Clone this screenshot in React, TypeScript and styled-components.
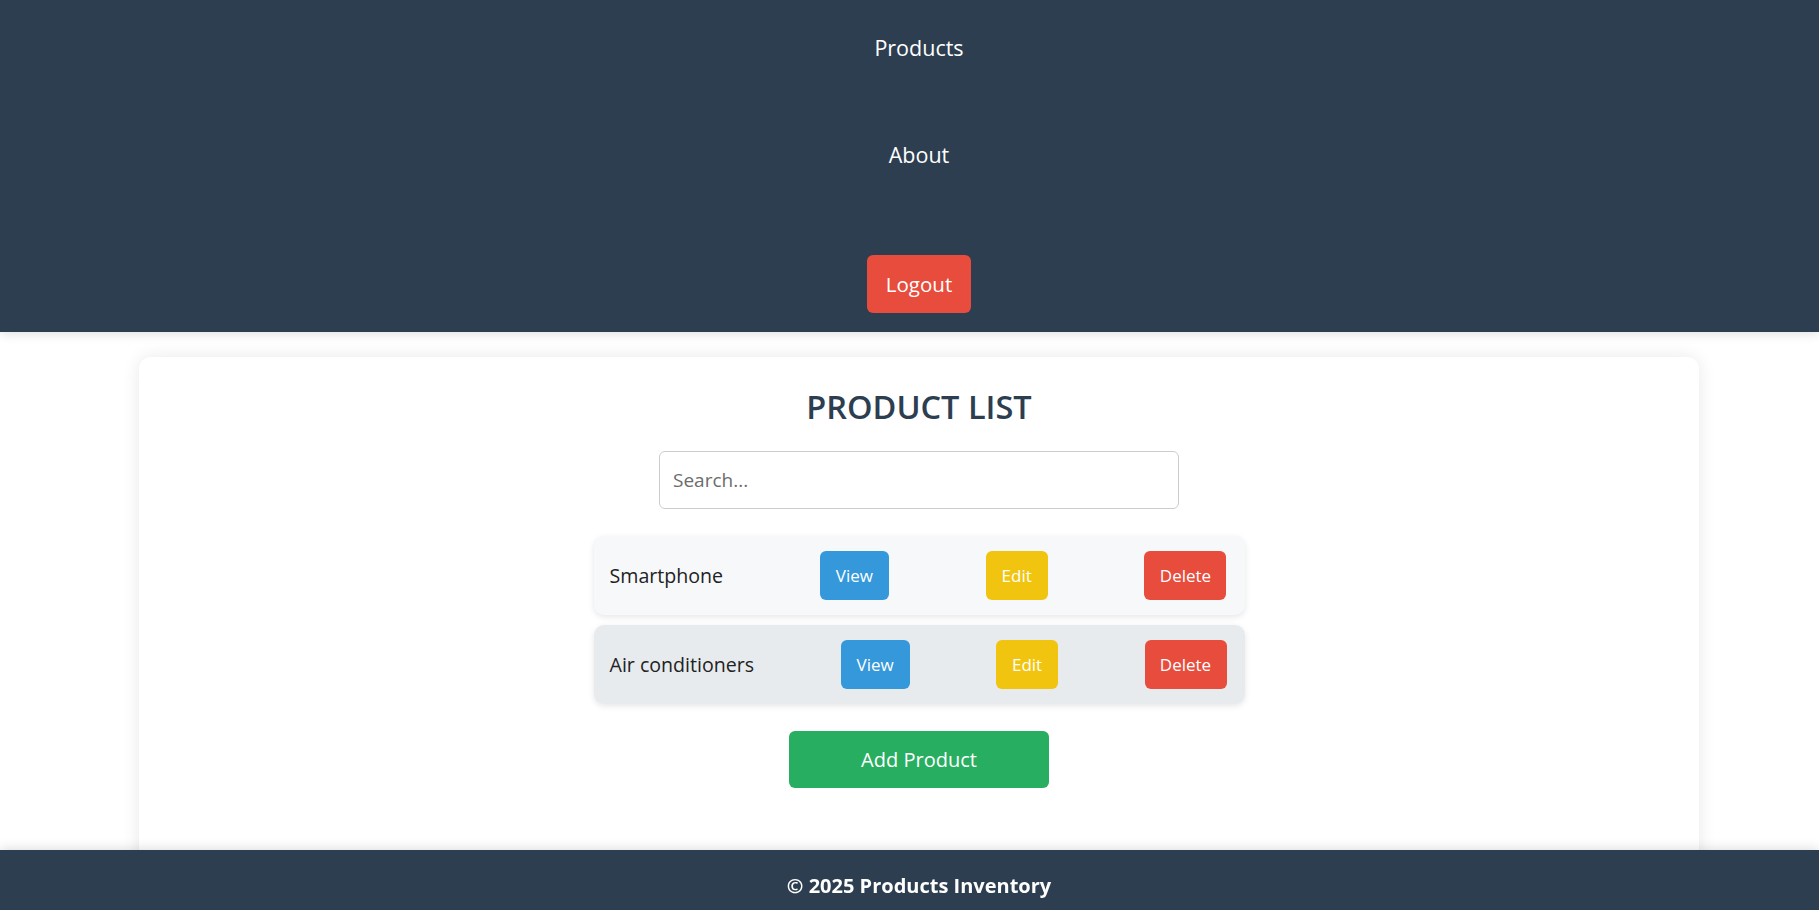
import styled, { createGlobalStyle } from "styled-components";

const GlobalStyle = createGlobalStyle`
  * { box-sizing: border-box; }
  html, body {
    margin: 0;
    padding: 0;
    background: #ffffff;
    font-family: "Open Sans", "Noto Sans", sans-serif;
    color: #222;
  }
`;

type Product = { id: number; name: string };

const products: Product[] = [
  { id: 1, name: "Smartphone" },
  { id: 2, name: "Air conditioners" },
];

const Header = styled.header`
  background: #2c3e50;
  padding: 20px 0 19px 19px;
  box-shadow: 0 2px 10px rgba(0, 0, 0, 0.12);
  position: relative;
  z-index: 1;
`;

const Nav = styled.nav`
  display: flex;
  flex-direction: column;
  align-items: center;
  gap: 51px;
`;

const NavLink = styled.a`
  display: block;
  padding: 16px;
  line-height: 24px;
  color: #ffffff;
  font-size: 21.5px;
  text-decoration: none;
`;

const LogoutButton = styled.button`
  margin-top: 21px;
  width: 104px;
  height: 58px;
  border: none;
  border-radius: 6px;
  background: #e74c3c;
  color: #ffffff;
  font-family: inherit;
  font-size: 20.5px;
  cursor: pointer;
`;

const Main = styled.main`
  padding: 25px 120px 0 139px;
`;

const Card = styled.section`
  background: #ffffff;
  border-radius: 12px;
  box-shadow: 0 0 18px rgba(0, 0, 0, 0.09);
  padding: 30px 20px 90px;
  display: flex;
  flex-direction: column;
  align-items: center;
`;

const Title = styled.h2`
  margin: 0;
  font-size: 32.5px;
  line-height: 40px;
  font-weight: 600;
  color: #2c3e50;
`;

const SearchInput = styled.input`
  margin-top: 24px;
  width: 520px;
  height: 58px;
  padding: 0 13px;
  border: 1px solid #cccccc;
  border-radius: 6px;
  font-family: inherit;
  font-size: 19px;
  color: #333;
  outline: none;

  &::placeholder {
    color: #6c6c6c;
  }
`;

const List = styled.ul`
  list-style: none;
  margin: 27px 0 0;
  padding: 0;
  width: 651px;
  display: flex;
  flex-direction: column;
  gap: 10px;
`;

const Row = styled.li<{ $alt?: boolean }>`
  height: 79px;
  display: flex;
  align-items: center;
  justify-content: space-between;
  padding: 0 18px 0 16px;
  border-radius: 10px;
  background: ${({ $alt }) => ($alt ? "#e8ebee" : "#f7f8fa")};
  box-shadow: 0 2px 6px rgba(0, 0, 0, 0.1);
`;

const Name = styled.span`
  font-size: 19.6px;
  color: #222;
`;

const ActionButton = styled.button<{ $color: string; $w: number }>`
  width: ${({ $w }) => $w}px;
  height: 49px;
  border: none;
  border-radius: 6px;
  background: ${({ $color }) => $color};
  color: #ffffff;
  font-family: inherit;
  font-size: 17px;
  cursor: pointer;
`;

const AddButton = styled.button`
  margin-top: 27px;
  width: 260px;
  height: 57px;
  border: none;
  border-radius: 6px;
  background: #27ae60;
  color: #ffffff;
  font-family: inherit;
  font-size: 20px;
  cursor: pointer;
`;

const Footer = styled.footer`
  position: fixed;
  left: 0;
  right: 0;
  bottom: 0;
  height: 60px;
  padding: 10px 0 0 19px;
  display: flex;
  align-items: center;
  justify-content: center;
  background: #2c3e50;
  color: #ffffff;
  font-size: 20px;
  font-weight: 700;
  box-shadow: 0 -2px 10px rgba(0, 0, 0, 0.12);
`;

export default function App() {
  return (
    <>
      <GlobalStyle />
      <Header>
        <Nav>
          <NavLink href="#">Products</NavLink>
          <NavLink href="#">About</NavLink>
          <LogoutButton>Logout</LogoutButton>
        </Nav>
      </Header>
      <Main>
        <Card>
          <Title>PRODUCT LIST</Title>
          <SearchInput placeholder="Search..." />
          <List>
            {products.map((p, i) => (
              <Row key={p.id} $alt={i % 2 === 1}>
                <Name>{p.name}</Name>
                <ActionButton $color="#3498db" $w={69}>View</ActionButton>
                <ActionButton $color="#f1c40f" $w={62}>Edit</ActionButton>
                <ActionButton $color="#e74c3c" $w={82}>Delete</ActionButton>
              </Row>
            ))}
          </List>
          <AddButton>Add Product</AddButton>
        </Card>
      </Main>
      <Footer>© 2025 Products Inventory</Footer>
    </>
  );
}
